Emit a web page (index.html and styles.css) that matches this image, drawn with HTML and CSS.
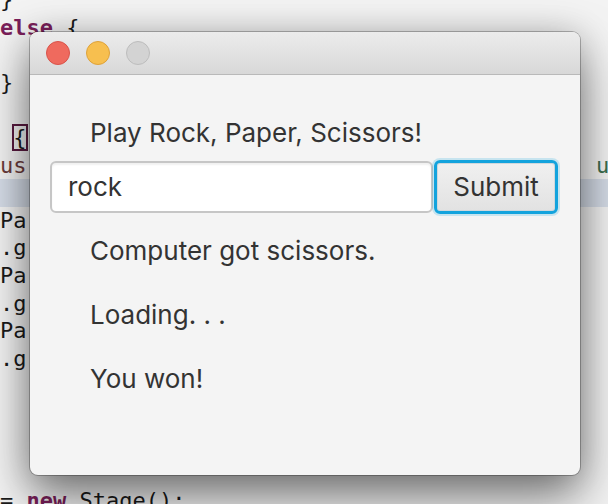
FILE: index.html
```html
<!DOCTYPE html>
<html>
<head>
<meta charset="utf-8">
<link rel="stylesheet" href="styles.css">
</head>
<body>
<div class="desk">
  <pre class="code"><span class="ln">}</span>
<span class="ln"><b class="kw">else</b> {</span>
<span class="ln"> </span>
<span class="ln">}</span>
<span class="ln"> </span>
<span class="ln"> <span class="brace">{</span></span>
<span class="ln us">us                                           <span class="grn">u</span></span>
<span class="ln hl"> </span>
<span class="ln">Pa</span>
<span class="ln">.g</span>
<span class="ln">Pa</span>
<span class="ln">.g</span>
<span class="ln">Pa</span>
<span class="ln">.g</span>
<span class="ln"> </span>
<span class="ln"> </span>
<span class="ln"> </span>
<span class="ln"> </span>
<span class="ln last">= <b class="kw">new</b> Stage();</span></pre>

  <div class="window">
    <div class="titlebar">
      <span class="light red"></span>
      <span class="light yellow"></span>
      <span class="light gray"></span>
    </div>
    <div class="content">
      <div class="label heading">Play Rock, Paper, Scissors!</div>
      <div class="row">
        <div class="field">rock</div>
        <div class="button">Submit</div>
      </div>
      <div class="label first">Computer got scissors.</div>
      <div class="label">Loading. . .</div>
      <div class="label">You won!</div>
    </div>
  </div>
</div>
</body>
</html>
```
FILE: styles.css
```css
html, body {
  margin: 0;
  padding: 0;
}
body {
  width: 608px;
  height: 504px;
  overflow: hidden;
  background: #f2f2f2;
}
.desk {
  position: relative;
  width: 608px;
  height: 504px;
  overflow: hidden;
  background: #f3f3f3;
}
.code {
  margin: 0;
  position: absolute;
  left: 0;
  top: -14px;
  font-family: "DejaVu Sans Mono", monospace;
  font-size: 22px;
  line-height: 27.6px;
  color: #1a1a1a;
  width: 608px;
}
.ln {
  display: inline-block;
  width: 608px;
  height: 27.6px;
  white-space: pre;
}
.ln.last {
  padding-top: 4px;
}
.hl {
  background: #d6dde8;
}
.kw {
  color: #7a1f5a;
  font-weight: bold;
}
.us {
  color: #6b3b3b;
}
.grn {
  color: #3b6e4f;
}
.brace {
  outline: 2px solid #5a1a40;
  outline-offset: -1px;
}
.window {
  position: absolute;
  left: 30px;
  top: 32px;
  width: 550px;
  height: 443px;
  border-radius: 8px;
  background: #f4f4f4;
  box-shadow: 0 0 0 1px rgba(0,0,0,0.26), 0 22px 48px rgba(0,0,0,0.5), 0 0 34px rgba(0,0,0,0.16);
  overflow: hidden;
  font-family: "Inter", "Helvetica Neue", sans-serif;
  color: #333;
}
.titlebar {
  height: 42px;
  border-bottom: 1px solid #b9b9b9;
  background: linear-gradient(#ececec, #d8d8d8);
  display: flex;
  align-items: center;
  padding-left: 16px;
  gap: 16px;
  box-sizing: content-box;
}
.light {
  width: 24px;
  height: 24px;
  border-radius: 50%;
  box-sizing: border-box;
}
.red { background: #ef6a5e; border: 1px solid #d9534a; }
.yellow { background: #f7bf4f; border: 1px solid #dea23a; }
.gray { background: #d3d3d3; border: 1px solid #bdbdbd; }
.content {
  display: flex;
  flex-direction: column;
  padding: 0 20px;
}
.label {
  font-size: 26px;
  padding-left: 40px;
  height: 64px;
  line-height: 64px;
}
.label.heading {
  height: 36px;
  line-height: 36px;
  padding-top: 40px;
  margin-bottom: 9px;
}
.label.first {
  margin-top: 5px;
}
.row {
  display: flex;
  align-items: center;
  height: 54px;
}
.field {
  width: 383px;
  height: 52px;
  box-sizing: border-box;
  background: #fff;
  border: 2px solid #c6c6c6;
  border-radius: 6px;
  box-shadow: inset 0 2px 2px rgba(0,0,0,0.06);
  font-size: 26px;
  line-height: 48px;
  padding-left: 16px;
}
.button {
  margin-left: 1px;
  width: 124px;
  height: 54px;
  box-sizing: border-box;
  border: 3px solid #13a3dd;
  border-radius: 6px;
  background: linear-gradient(#f0f0f0, #e2e2e2);
  box-shadow: 0 0 0 2px rgba(19,163,221,0.2), inset 0 0 0 1px #d0d8dc;
  font-size: 26px;
  line-height: 48px;
  text-align: center;
}
```
